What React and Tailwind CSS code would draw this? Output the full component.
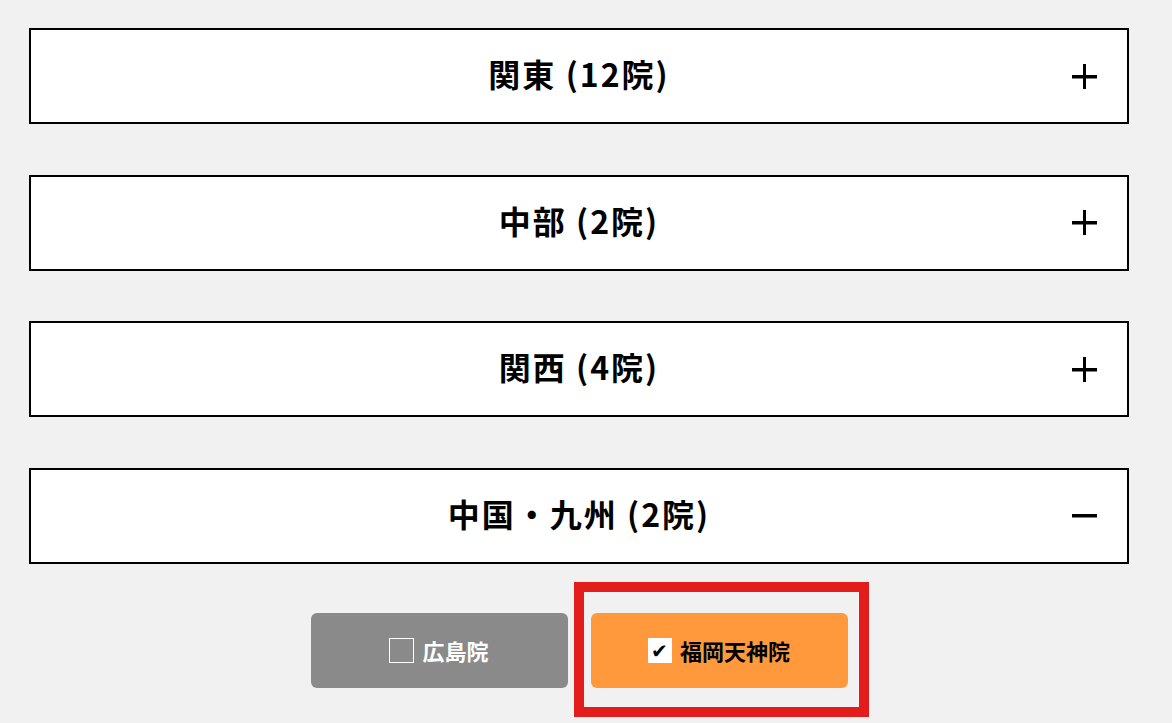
import { useState } from "react"

const areas = [
  { name: "関東", count: 12, clinics: [] },
  { name: "中部", count: 2, clinics: [] },
  { name: "関西", count: 4, clinics: [] },
  { name: "中国・九州", count: 2, clinics: ["広島院", "福岡天神院"] },
]

function ToggleIcon({ open }) {
  return (
    <svg width="25" height="25" viewBox="0 0 25 25" className="block">
      <rect x="0" y="11" width="25" height="3.5" fill="#000" />
      {!open && <rect x="11" y="0" width="3" height="25" fill="#000" />}
    </svg>
  )
}

function AreaHeader({ area, open, onToggle }) {
  return (
    <button
      onClick={onToggle}
      className="grid h-[96px] w-full grid-cols-[1fr_auto_1fr] items-center border-2 border-black bg-white"
    >
      <span />
      <span className="pb-[6px] text-[32px] font-bold leading-none tracking-[2px] text-black">
        {area.name} ({area.count}院)
      </span>
      <span className="justify-self-end pr-[30px]">
        <ToggleIcon open={open} />
      </span>
    </button>
  )
}

function ClinicButton({ label, checked, onClick }) {
  return (
    <button
      onClick={onClick}
      className={
        "flex h-[75px] w-[257px] items-center justify-center gap-[8px] rounded-[6px] " +
        (checked ? "bg-[#ff993c] text-black" : "bg-[#8a8a8a] text-white")
      }
    >
      {checked ? (
        <span className="flex h-[25px] w-[24px] items-center justify-center bg-white text-[20px] leading-none text-black">
          ✔
        </span>
      ) : (
        <span className="h-[25px] w-[25px] border-[1.5px] border-white" />
      )}
      <span className="text-[22px] font-bold leading-none">{label}</span>
    </button>
  )
}

export default function App() {
  const [openIndex, setOpenIndex] = useState(3)
  const [selected, setSelected] = useState(["福岡天神院"])

  const toggleClinic = (c) => {
    setSelected((prev) => (prev.includes(c) ? prev.filter((x) => x !== c) : [...prev, c]))
  }

  return (
    <div
      className="min-h-[723px] bg-[#f1f1f1] pt-[28px]"
      style={{ fontFamily: '"Noto Sans CJK JP", "Noto Sans", sans-serif' }}
    >
      <div className="ml-[29px] flex w-[1100px] flex-col gap-[50.5px]">
        {areas.map((area, i) => (
          <div key={area.name}>
            <AreaHeader
              area={area}
              open={openIndex === i}
              onToggle={() => setOpenIndex(openIndex === i ? -1 : i)}
            />
            {openIndex === i && area.clinics.length > 0 && (
              <div className="mt-[49px] flex items-start justify-center gap-[23px]">
                {area.clinics.map((c) =>
                  selected.includes(c) ? (
                    // red frame around the chosen clinic, pulled back with negative margins
                    <div
                      key={c}
                      className="-mb-[29px] -ml-[17px] -mr-[21px] -mt-[31px] border-[10px] border-[#e31c1c] pb-[19px] pl-[7px] pr-[11px] pt-[21px]"
                    >
                      <ClinicButton label={c} checked onClick={() => toggleClinic(c)} />
                    </div>
                  ) : (
                    <ClinicButton key={c} label={c} checked={false} onClick={() => toggleClinic(c)} />
                  )
                )}
              </div>
            )}
          </div>
        ))}
      </div>
    </div>
  )
}
